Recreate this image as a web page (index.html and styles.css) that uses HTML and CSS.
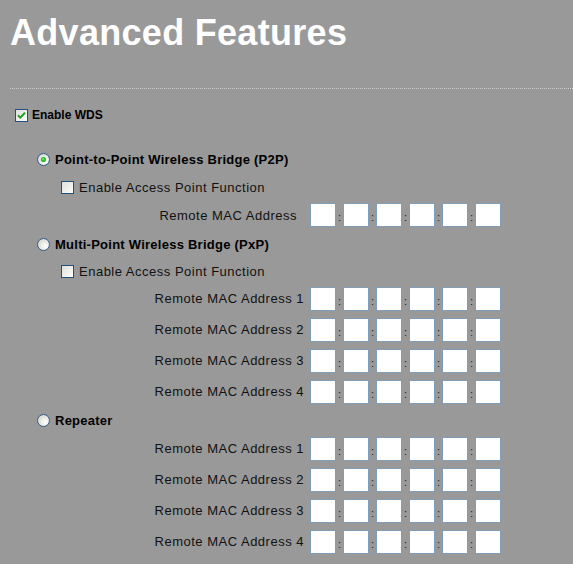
FILE: index.html
```html
<!DOCTYPE html>
<html>
<head>
<meta charset="utf-8">
<link rel="stylesheet" href="styles.css">
</head>
<body>
<h1 class="title">Advanced Features</h1>
<div class="rule"></div>

<div class="wds-line">
  <span class="box">
    <svg width="13" height="13" viewBox="0 0 13 13"><defs><linearGradient id="g1" x1="0" y1="0" x2="1" y2="1"><stop offset="0" stop-color="#dcdcd7"/><stop offset="1" stop-color="#ffffff"/></linearGradient></defs><rect x="0.5" y="0.5" width="12" height="12" fill="url(#g1)" stroke="#1c5180"/><path d="M3 6.2 L5.3 8.6 L10 3.8" fill="none" stroke="#21a121" stroke-width="2"/></svg>
  </span>
  <span class="bold12">Enable WDS</span>
</div>

<div class="mode mode-p2p">
  <div class="radio-line">
    <span class="rad">
      <svg width="13" height="13" viewBox="0 0 13 13"><defs><radialGradient id="r1" cx="0.65" cy="0.65" r="0.7"><stop offset="0" stop-color="#ffffff"/><stop offset="1" stop-color="#d6d6ce"/></radialGradient></defs><circle cx="6.5" cy="6.5" r="6" fill="url(#r1)" stroke="#2f5a86"/><circle cx="6.5" cy="6.5" r="2.6" fill="#2fb52f"/><circle cx="6.2" cy="6.2" r="1" fill="#8fe28f"/></svg>
    </span>
    <span class="bold13">Point-to-Point Wireless Bridge (P2P)</span>
  </div>
  <div class="ap-line ap-a">
    <span class="box">
      <svg width="13" height="13" viewBox="0 0 13 13"><defs><linearGradient id="g2" x1="0" y1="0" x2="1" y2="1"><stop offset="0" stop-color="#dcdcd7"/><stop offset="1" stop-color="#ffffff"/></linearGradient></defs><rect x="0.5" y="0.5" width="12" height="12" fill="url(#g2)" stroke="#1c5180"/></svg>
    </span>
    <span class="norm">Enable Access Point Function</span>
  </div>
  <div class="mac-row mac-single">
    <span class="mac-label label-single">Remote MAC Address</span>
    <div class="mac"><input class="oct"><span class="col">:</span><input class="oct"><span class="col">:</span><input class="oct"><span class="col">:</span><input class="oct"><span class="col">:</span><input class="oct"><span class="col">:</span><input class="oct"></div>
  </div>
</div>

<div class="mode">
  <div class="radio-line">
    <span class="rad">
      <svg width="13" height="13" viewBox="0 0 13 13"><defs><radialGradient id="r2" cx="0.65" cy="0.65" r="0.7"><stop offset="0" stop-color="#ffffff"/><stop offset="1" stop-color="#d6d6ce"/></radialGradient></defs><circle cx="6.5" cy="6.5" r="6" fill="url(#r2)" stroke="#2f5a86"/></svg>
    </span>
    <span class="bold13">Multi-Point Wireless Bridge (PxP)</span>
  </div>
  <div class="ap-line ap-b">
    <span class="box">
      <svg width="13" height="13" viewBox="0 0 13 13"><defs><linearGradient id="g3" x1="0" y1="0" x2="1" y2="1"><stop offset="0" stop-color="#dcdcd7"/><stop offset="1" stop-color="#ffffff"/></linearGradient></defs><rect x="0.5" y="0.5" width="12" height="12" fill="url(#g3)" stroke="#1c5180"/></svg>
    </span>
    <span class="norm">Enable Access Point Function</span>
  </div>
  <div class="mac-row">
    <span class="mac-label">Remote MAC Address 1</span>
    <div class="mac"><input class="oct"><span class="col">:</span><input class="oct"><span class="col">:</span><input class="oct"><span class="col">:</span><input class="oct"><span class="col">:</span><input class="oct"><span class="col">:</span><input class="oct"></div>
  </div>
  <div class="mac-row">
    <span class="mac-label">Remote MAC Address 2</span>
    <div class="mac"><input class="oct"><span class="col">:</span><input class="oct"><span class="col">:</span><input class="oct"><span class="col">:</span><input class="oct"><span class="col">:</span><input class="oct"><span class="col">:</span><input class="oct"></div>
  </div>
  <div class="mac-row">
    <span class="mac-label">Remote MAC Address 3</span>
    <div class="mac"><input class="oct"><span class="col">:</span><input class="oct"><span class="col">:</span><input class="oct"><span class="col">:</span><input class="oct"><span class="col">:</span><input class="oct"><span class="col">:</span><input class="oct"></div>
  </div>
  <div class="mac-row">
    <span class="mac-label">Remote MAC Address 4</span>
    <div class="mac"><input class="oct"><span class="col">:</span><input class="oct"><span class="col">:</span><input class="oct"><span class="col">:</span><input class="oct"><span class="col">:</span><input class="oct"><span class="col">:</span><input class="oct"></div>
  </div>
</div>

<div class="mode">
  <div class="radio-line radio-rep">
    <span class="rad">
      <svg width="13" height="13" viewBox="0 0 13 13"><defs><radialGradient id="r3" cx="0.65" cy="0.65" r="0.7"><stop offset="0" stop-color="#ffffff"/><stop offset="1" stop-color="#d6d6ce"/></radialGradient></defs><circle cx="6.5" cy="6.5" r="6" fill="url(#r3)" stroke="#2f5a86"/></svg>
    </span>
    <span class="bold13">Repeater</span>
  </div>
  <div class="mac-row">
    <span class="mac-label">Remote MAC Address 1</span>
    <div class="mac"><input class="oct"><span class="col">:</span><input class="oct"><span class="col">:</span><input class="oct"><span class="col">:</span><input class="oct"><span class="col">:</span><input class="oct"><span class="col">:</span><input class="oct"></div>
  </div>
  <div class="mac-row">
    <span class="mac-label">Remote MAC Address 2</span>
    <div class="mac"><input class="oct"><span class="col">:</span><input class="oct"><span class="col">:</span><input class="oct"><span class="col">:</span><input class="oct"><span class="col">:</span><input class="oct"><span class="col">:</span><input class="oct"></div>
  </div>
  <div class="mac-row">
    <span class="mac-label">Remote MAC Address 3</span>
    <div class="mac"><input class="oct"><span class="col">:</span><input class="oct"><span class="col">:</span><input class="oct"><span class="col">:</span><input class="oct"><span class="col">:</span><input class="oct"><span class="col">:</span><input class="oct"></div>
  </div>
  <div class="mac-row">
    <span class="mac-label">Remote MAC Address 4</span>
    <div class="mac"><input class="oct"><span class="col">:</span><input class="oct"><span class="col">:</span><input class="oct"><span class="col">:</span><input class="oct"><span class="col">:</span><input class="oct"><span class="col">:</span><input class="oct"></div>
  </div>
</div>
</body>
</html>
```
FILE: styles.css
```css
html, body {
  margin: 0;
  padding: 0;
  background: #999999;
  font-family: "Liberation Sans", Arial, sans-serif;
  color: #000;
  overflow: hidden;
}

.title {
  margin: 0;
  padding: 12px 0 0 10px;
  font-size: 36px;
  line-height: 41px;
  font-weight: bold;
  letter-spacing: 0.3px;
  color: #ffffff;
}

.rule {
  margin: 35px 0 0 10px;
  height: 0;
  border-top: 1px dotted #cfcfcf;
}

.wds-line {
  display: flex;
  align-items: center;
  height: 20px;
  margin-top: 16px;
  padding-left: 15px;
  gap: 4px;
}

.box, .rad {
  display: flex;
  width: 13px;
  height: 13px;
  flex: none;
}

.bold12 {
  font-size: 12px;
  font-weight: bold;
}

.bold13 {
  font-size: 13px;
  font-weight: bold;
  letter-spacing: 0.25px;
}

.norm {
  font-size: 13px;
  letter-spacing: 0.5px;
  color: #111;
}

.mode-p2p {
  margin-top: 19px;
}

.radio-line {
  display: flex;
  align-items: center;
  height: 30px;
  padding-left: 37px;
  gap: 5px;
}

.radio-rep {
  height: 26px;
}

.ap-line {
  display: flex;
  align-items: center;
  padding-left: 61px;
  gap: 5px;
}

.ap-a { height: 27px; }
.ap-b { height: 24px; }

.mac-row {
  display: flex;
  align-items: center;
  height: 31px;
  gap: 6px;
}

.mac-single {
  height: 28px;
}

.mac-label {
  width: 304px;
  flex: none;
  text-align: right;
  font-size: 13px;
  letter-spacing: 0.5px;
  color: #111;
  white-space: nowrap;
}

.label-single {
  width: 297px;
  margin-right: 7px;
}

.mac {
  display: flex;
  align-items: flex-end;
}

.oct {
  width: 26px;
  height: 24px;
  box-sizing: border-box;
  margin: 0;
  padding: 0;
  border: 1px solid #7f9db9;
  background: #ffffff;
  outline: none;
}

.col {
  width: 7px;
  text-align: center;
  font-size: 11px;
  line-height: 11px;
  padding-bottom: 4px;
  color: #222;
}
```
